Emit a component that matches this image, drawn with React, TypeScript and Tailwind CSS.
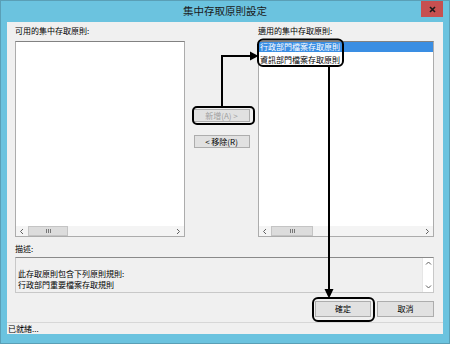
import { ReactNode } from 'react'

function Chevron({ dir }: { dir: 'left' | 'right' | 'up' | 'down' }) {
  const d = {
    left: 'M4 1 L1.5 3.5 L4 6',
    right: 'M2 1 L4.5 3.5 L2 6',
    up: 'M1 4.5 L3.5 2 L6 4.5',
    down: 'M1 2.5 L3.5 5 L6 2.5',
  }[dir]
  return (
    <svg width="7" height="7" viewBox="0 0 7 7" className="block">
      <path d={d} fill="none" stroke="#606060" strokeWidth="1" />
    </svg>
  )
}

function HScroll({ thumb }: { thumb: number }) {
  return (
    <div className="flex h-[10px] items-stretch bg-[#f4f4f4]">
      <div className="flex w-[12px] items-center justify-center">
        <Chevron dir="left" />
      </div>
      <div
        className="flex items-center justify-center border border-[#c4c4c4] bg-[#dcdcdc]"
        style={{ width: thumb }}
      >
        <div className="flex gap-[1px]">
          <div className="h-[4px] w-[1px] bg-[#777]" />
          <div className="h-[4px] w-[1px] bg-[#777]" />
          <div className="h-[4px] w-[1px] bg-[#777]" />
        </div>
      </div>
      <div className="flex-1" />
      <div className="flex w-[11px] items-center justify-center">
        <Chevron dir="right" />
      </div>
    </div>
  )
}

function ListBox({ children, thumb }: { children?: ReactNode; thumb: number }) {
  return (
    <div className="flex h-[196px] flex-col border border-[#acacac] border-t-[#828282] bg-white">
      <div className="flex-1 overflow-hidden">{children}</div>
      <HScroll thumb={thumb} />
    </div>
  )
}

function Btn({ children, disabled }: { children: ReactNode; disabled?: boolean }) {
  return (
    <div
      className={
        'flex items-center justify-center border border-[#adadad] bg-[#e1e1e1] ' +
        (disabled ? 'text-[#a0a0a0]' : 'text-black')
      }
    >
      {children}
    </div>
  )
}

function Annotations() {
  return (
    <svg
      width="450"
      height="344"
      viewBox="0 0 450 344"
      className="pointer-events-none absolute left-0 top-0"
    >
      <g fill="none" stroke="#000" strokeWidth="2">
        <rect x="257" y="38.5" width="85" height="26.5" rx="5" />
        <rect x="192" y="106" width="61" height="17" rx="4" />
        <rect x="312" y="297" width="61" height="23" rx="5" />
        <path d="M221 106 V55 H250" />
        <path d="M328 65 V289" />
      </g>
      <polygon points="249,50.5 257.5,55 249,59.5" fill="#000" />
      <polygon points="323.5,288 328,297.5 332.5,288" fill="#000" />
    </svg>
  )
}

export default function App() {
  return (
    <div className="relative h-[344px] w-[450px] overflow-hidden border border-[#5a9fb6] bg-[#6bc3df] font-['Noto_Sans_CJK_TC',sans-serif] text-[8px] leading-none text-black">
      {/* title bar */}
      <div className="relative flex h-[21px] items-center justify-center">
        <span className="text-[10.5px] text-[#1a1a1a]">集中存取原則設定</span>
        <div className="absolute right-[6px] top-0 flex h-[16px] w-[22px] items-center justify-center bg-[#c75050]">
          <svg width="7" height="7" viewBox="0 0 7 7">
            <path d="M1 1 L6 6 M6 1 L1 6" stroke="#1a1a1a" strokeWidth="1.6" />
          </svg>
        </div>
      </div>

      {/* client area */}
      <div className="mx-[6px] flex h-[312px] flex-col bg-[#f0f0f0]">
        <div className="flex pl-[8px]">
          <div className="flex w-[170px] flex-col">
            <div className="flex h-[19px] items-center pb-[1px]">可用的集中存取原則:</div>
            <ListBox thumb={40} />
          </div>

          <div className="flex w-[73px] flex-col items-center pt-[87px]">
            <div className="h-[13px] w-[57px]">
              <Btn disabled>
                <span className="flex h-[11px] items-center">新增(A) &gt;</span>
              </Btn>
            </div>
            <div className="mt-[13px] h-[13px] w-[56px]">
              <Btn>
                <span className="flex h-[11px] items-center">&lt; 移除(R)</span>
              </Btn>
            </div>
          </div>

          <div className="flex w-[176px] flex-col">
            <div className="flex h-[19px] items-center pb-[1px]">適用的集中存取原則:</div>
            <ListBox thumb={42}>
              <div className="flex h-[10px] items-center bg-[#3a8ee3] pl-[1px] text-white">
                行政部門檔案存取原則
              </div>
              <div className="flex h-[13px] items-center pl-[1px] pt-[2px]">資訊部門檔案存取原則</div>
            </ListBox>
          </div>
        </div>

        <div className="flex h-[20px] items-center pl-[8px] pt-[3px]">描述:</div>

        <div className="ml-[8px] flex h-[36px] w-[419px] border border-[#c8c8c8] border-t-[#8a8a8a] bg-[#f0f0f0]">
          <div className="flex flex-1 flex-col gap-[3px] pl-[2px] pt-[12px]">
            <span>此存取原則包含下列原則規則:</span>
            <span>行政部門重要檔案存取規則</span>
          </div>
          <div className="flex w-[11px] flex-col justify-between border-l border-[#e6e6e6] bg-white">
            <div className="flex h-[11px] items-center justify-center">
              <Chevron dir="up" />
            </div>
            <div className="flex h-[11px] items-center justify-center">
              <Chevron dir="down" />
            </div>
          </div>
        </div>

        <div className="mt-[8px] flex justify-end gap-[6px] pr-[9px]">
          <div className="h-[16px] w-[56px]">
            <Btn>
              <span className="flex h-[14px] items-center">確定</span>
            </Btn>
          </div>
          <div className="h-[16px] w-[57px]">
            <Btn>
              <span className="flex h-[14px] items-center">取消</span>
            </Btn>
          </div>
        </div>

        <div className="flex-1" />
        <div className="flex h-[12px] items-center border-t border-[#d7d7d7] pl-[1px]">已就緒...</div>
      </div>

      <Annotations />
    </div>
  )
}
